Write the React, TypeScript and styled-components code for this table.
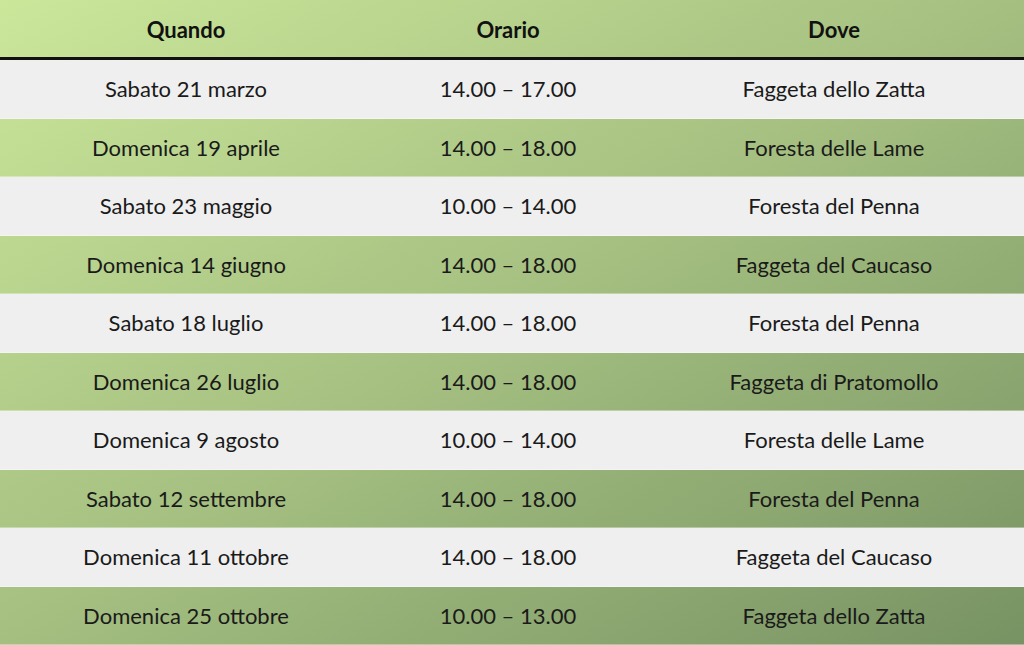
import React, { FC } from "react";
import styled, { createGlobalStyle } from "styled-components";

const GlobalStyle = createGlobalStyle`
	html, body {
		margin: 0;
		padding: 0;
		background: #efefef;
	}
	body {
		font-family: Lato, "Open Sans", sans-serif;
	}
`;

const events = [
	{ when: "Sabato 21 marzo", time: "14.00 – 17.00", where: "Faggeta dello Zatta" },
	{ when: "Domenica 19 aprile", time: "14.00 – 18.00", where: "Foresta delle Lame" },
	{ when: "Sabato 23 maggio", time: "10.00 – 14.00", where: "Foresta del Penna" },
	{ when: "Domenica 14 giugno", time: "14.00 – 18.00", where: "Faggeta del Caucaso" },
	{ when: "Sabato 18 luglio", time: "14.00 – 18.00", where: "Foresta del Penna" },
	{ when: "Domenica 26 luglio", time: "14.00 – 18.00", where: "Faggeta di Pratomollo" },
	{ when: "Domenica 9 agosto", time: "10.00 – 14.00", where: "Foresta delle Lame" },
	{ when: "Sabato 12 settembre", time: "14.00 – 18.00", where: "Foresta del Penna" },
	{ when: "Domenica 11 ottobre", time: "14.00 – 18.00", where: "Faggeta del Caucaso" },
	{ when: "Domenica 25 ottobre", time: "10.00 – 13.00", where: "Faggeta dello Zatta" },
];

const App: FC = () => {
	return (
		<>
			<GlobalStyle />
			<Table>
				<HeaderRow>
					<HeadCell>Quando</HeadCell>
					<HeadCell>Orario</HeadCell>
					<HeadCell>Dove</HeadCell>
				</HeaderRow>
				{events.map((ev, i) => {
					return (
						<Row key={ev.when} $striped={i % 2 === 0}>
							<Cell>{ev.when}</Cell>
							<Cell>{ev.time}</Cell>
							<Cell>{ev.where}</Cell>
						</Row>
					);
				})}
			</Table>
		</>
	);
};

export default App;

const Table = styled.div`
	width: 1024px;
	height: 645px;
	display: grid;
	grid-template-rows: 60px repeat(10, 1fr);
	background: linear-gradient(to bottom right, #cbe79a 0%, #a4bf80 50%, #789363 100%);
	overflow: hidden;
`;

const HeaderRow = styled.div`
	display: grid;
	grid-template-columns: 372px 272px 380px;
	border-bottom: 3px solid #111;
	box-sizing: border-box;
`;

const HeadCell = styled.div`
	display: flex;
	align-items: center;
	justify-content: center;
	font-size: 22px;
	font-weight: 700;
	color: #111;
	padding-top: 2px;
`;

const Row = styled.div<{ $striped: boolean }>`
	display: grid;
	grid-template-columns: 372px 272px 380px;
	background: ${(p) => (p.$striped ? "#efefef" : "transparent")};
	border-bottom: 1px solid rgba(255, 255, 255, 0.35);
	box-sizing: border-box;
`;

const Cell = styled.div`
	display: flex;
	align-items: center;
	justify-content: center;
	font-size: 22px;
	color: #1a1a1a;
`;
